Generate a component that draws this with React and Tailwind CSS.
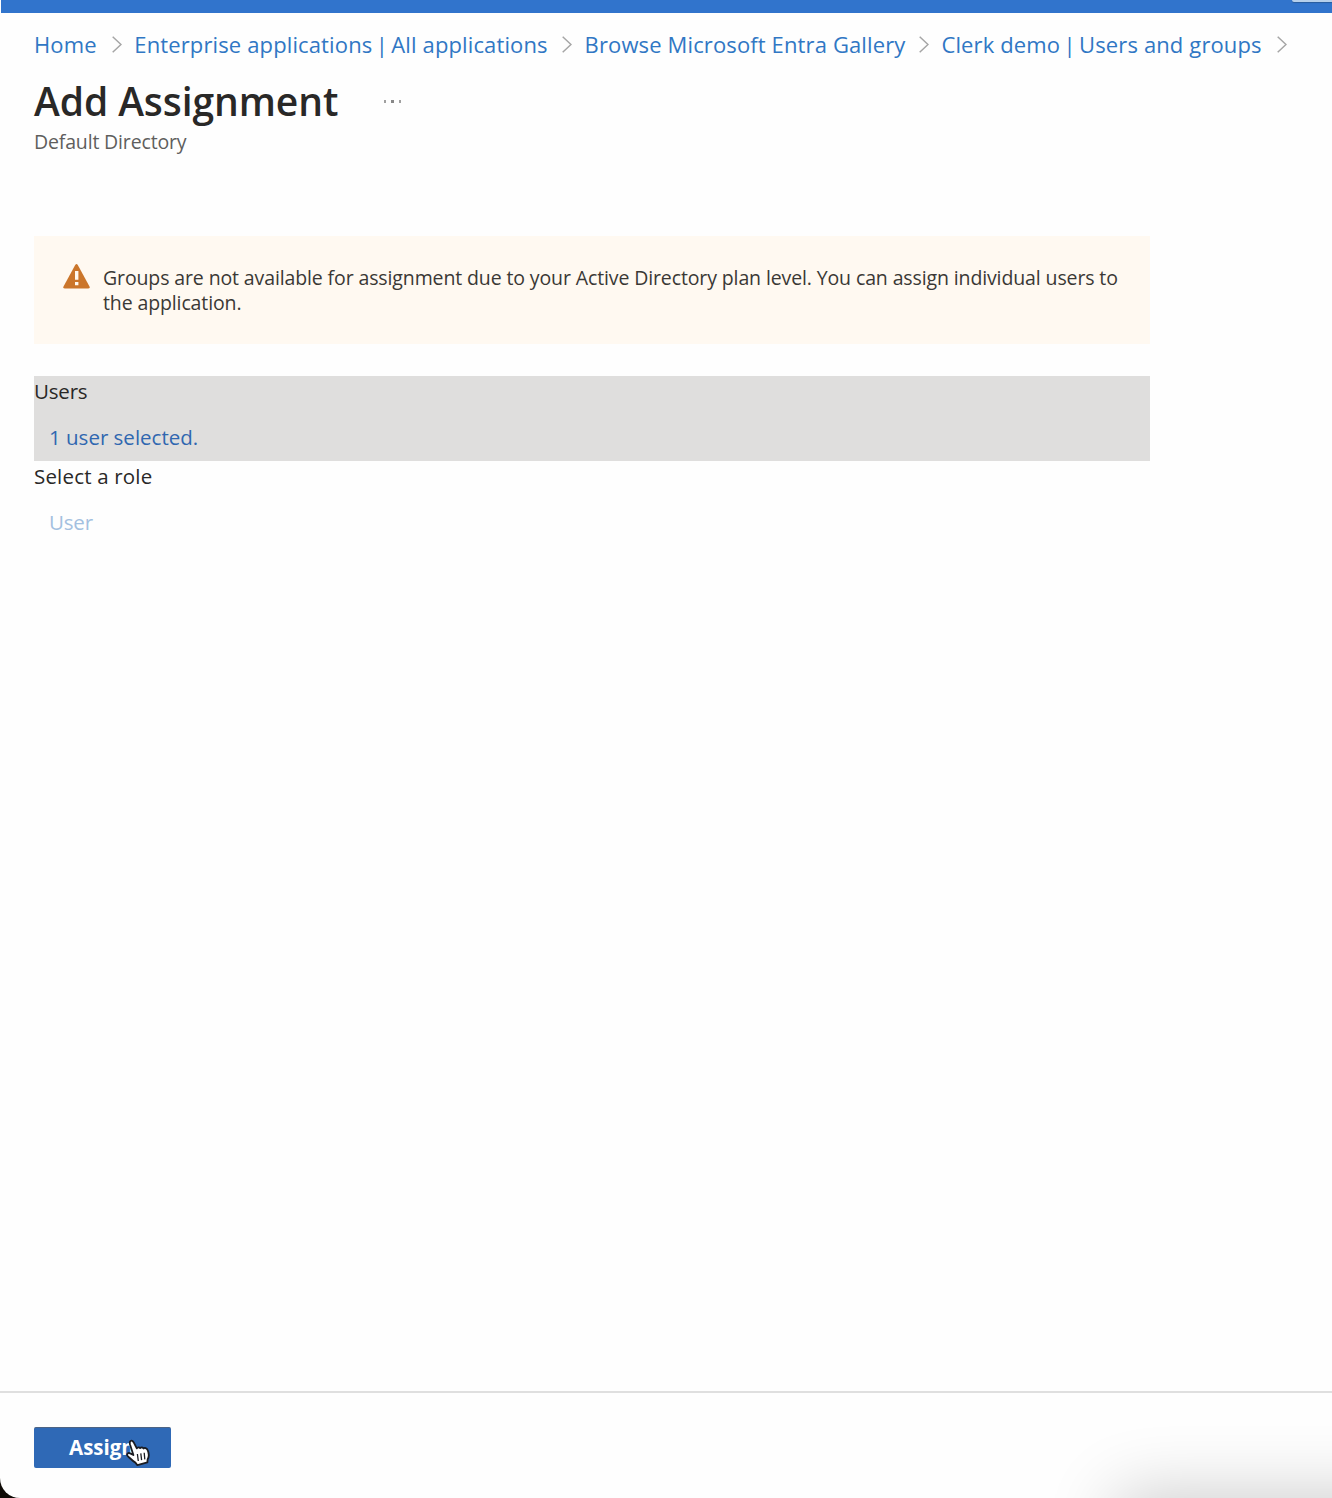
import React from 'react';

const crumbs = [
  { parts: ['Home'], width: 'w-[64px]' },
  { parts: ['Enterprise applications ', ' All applications'], width: 'w-[414px]' },
  { parts: ['Browse Microsoft Entra Gallery'], width: 'w-[320.5px]' },
  { parts: ['Clerk demo ', ' Users and groups'], width: 'w-[322px]' },
];

function Chevron() {
  return (
    <svg className="mt-[12px] ml-[14px] h-[17px] w-[10px] shrink-0" viewBox="0 0 10 17" fill="none" stroke="#a5a5a5" strokeWidth="1.5">
      <path d="M0.7 0.8 9 8.5 0.7 16.2" />
    </svg>
  );
}

function WarningIcon() {
  return (
    <svg className="mt-[28px] h-[25px] w-[27px] shrink-0" viewBox="0 0 27 25">
      <path d="M12.2 1.1Q13.5-.9 14.8 1.1L26.5 22.4Q27.2 24.6 25 24.6H2Q-.2 24.6.5 22.4Z" fill="#cb762b" />
      <path d="M12 7h3.4v8.8H12zM12 18h3.4v3.2H12z" fill="#fff9f0" />
    </svg>
  );
}

function HandCursor() {
  return (
    <svg className="absolute top-[11px] left-[91px] h-[29px] w-[26px]" viewBox="0 0 26 29">
      <path
        d="M5.4 2.2C6.5 1.2 7.9 1.8 8.7 3.4L11.8 9.4C12.5 8 14.4 8 15.2 9.1 16.2 8 17.8 8.3 18.5 9.5 19.7 8.4 21.6 8.9 22.4 10.7 24 13.8 24.2 17.5 22.6 20.4L22.4 23.4 12.4 26.2 10.4 23.6C7.8 22.2 5.2 19.4 2.8 17.2 1 15.2 3.2 13.3 5.2 14.4L8.4 16 5 5.5C4.6 4.1 4.6 3 5.4 2.2Z"
        fill="#fff"
        stroke="#1a1c22"
        strokeWidth="1.8"
        strokeLinejoin="round"
      />
      <path d="M12.4 15 13.3 22M15.8 14.4 16.6 21.2M19.2 13.8 19.8 20.4" stroke="#1a1c22" strokeWidth="1.3" fill="none" />
    </svg>
  );
}

export default function App() {
  return (
    <div className="h-[1498px] w-full overflow-hidden bg-[#0f0b06] font-['Open_Sans',sans-serif]">
      <div className="relative flex h-full flex-col overflow-hidden rounded-bl-[20px] bg-[#fefefe]">
        <header className="ml-px flex h-[13px] shrink-0 justify-end bg-[#3174cc]">
          <div className="h-[2px] w-10 rounded-bl-sm bg-[#b5cfeb] shadow-[0_1px_1px_#2a5d9d]" />
        </header>

        <nav className="mt-[11px] flex h-10 shrink-0 pl-[34px] text-[22px] leading-10 tracking-[0.13px] whitespace-nowrap text-[#3077c4]">
          {crumbs.map(({ parts, width }) => (
            <div key={parts[0]} className="mr-[12.3px] flex shrink-0">
              <a className={width}>
                {parts[0]}
                {parts[1] && <span className="-mx-[2.5px]">|</span>}
                {parts[1]}
              </a>
              <Chevron />
            </div>
          ))}
        </nav>

        <div className="mt-[13px] flex h-12 shrink-0 pl-[34px]">
          <h1 className="w-[350px] text-[39px] leading-[48px] font-semibold tracking-[-0.08px] whitespace-nowrap text-[#292827]">Add Assignment</h1>
          <div className="mt-[23px] flex gap-[5px]">
            <span className="h-[3px] w-[2px] bg-[#a0a0a0]" />
            <span className="h-[3px] w-[3px] bg-[#888]" />
            <span className="h-[3px] w-[2px] bg-[#a0a0a0]" />
          </div>
        </div>
        <p className="mt-[3px] h-7 shrink-0 pl-[34px] text-[19.5px] leading-7 tracking-[-0.16px] text-[#5f5e5d]">Default Directory</p>

        <main className="mt-[80px] flex w-[1150px] grow flex-col pl-[34px]">
          <div className="flex h-[108px] shrink-0 bg-[#fff9f1] pl-[28.5px]">
            <WarningIcon />
            <p className="mt-[28.5px] ml-[13.5px] text-[19.5px] leading-[25.5px] tracking-[-0.12px] whitespace-nowrap text-[#3a3835]">
              Groups are not available for assignment due to your Active Directory plan level. You can assign individual users to
              <br />
              the application.
            </p>
          </div>

          <section className="mt-8 h-[84.5px] shrink-0 bg-[#dfdedd] text-[20.5px] leading-[30px]">
            <h2 className="tracking-[-0.2px] text-[#292827]">Users</h2>
            <a className="mt-4 ml-[15px] block text-[#3067b0]">1 user selected.</a>
          </section>
          <section className="h-[84px] shrink-0 text-[20.5px] leading-[30px]">
            <h2 className="tracking-[0.18px] text-[#292827]">Select a role</h2>
            <a className="mt-4 ml-[15px] block tracking-[-0.2px] text-[#a3c0e0]">User</a>
          </section>
        </main>

        <footer className="flex h-[107px] shrink-0 border-t-2 border-[#dfdfdf] pt-[34px] pl-[34px]">
          <button className="relative h-[41px] w-[137px] rounded-[2px] border-t border-[#4d6484] bg-[#2f69b6] pl-[35px] text-left text-[20.5px] font-bold text-white">
            <span className="block -translate-y-px leading-[39px]">Assign</span>
            <HandCursor />
          </button>
        </footer>
        <div className="pointer-events-none absolute top-full left-[1120px] h-20 w-[500px] shadow-[0_0_70px_4px_rgba(0,0,0,0.2)]" />
      </div>
    </div>
  );
}
